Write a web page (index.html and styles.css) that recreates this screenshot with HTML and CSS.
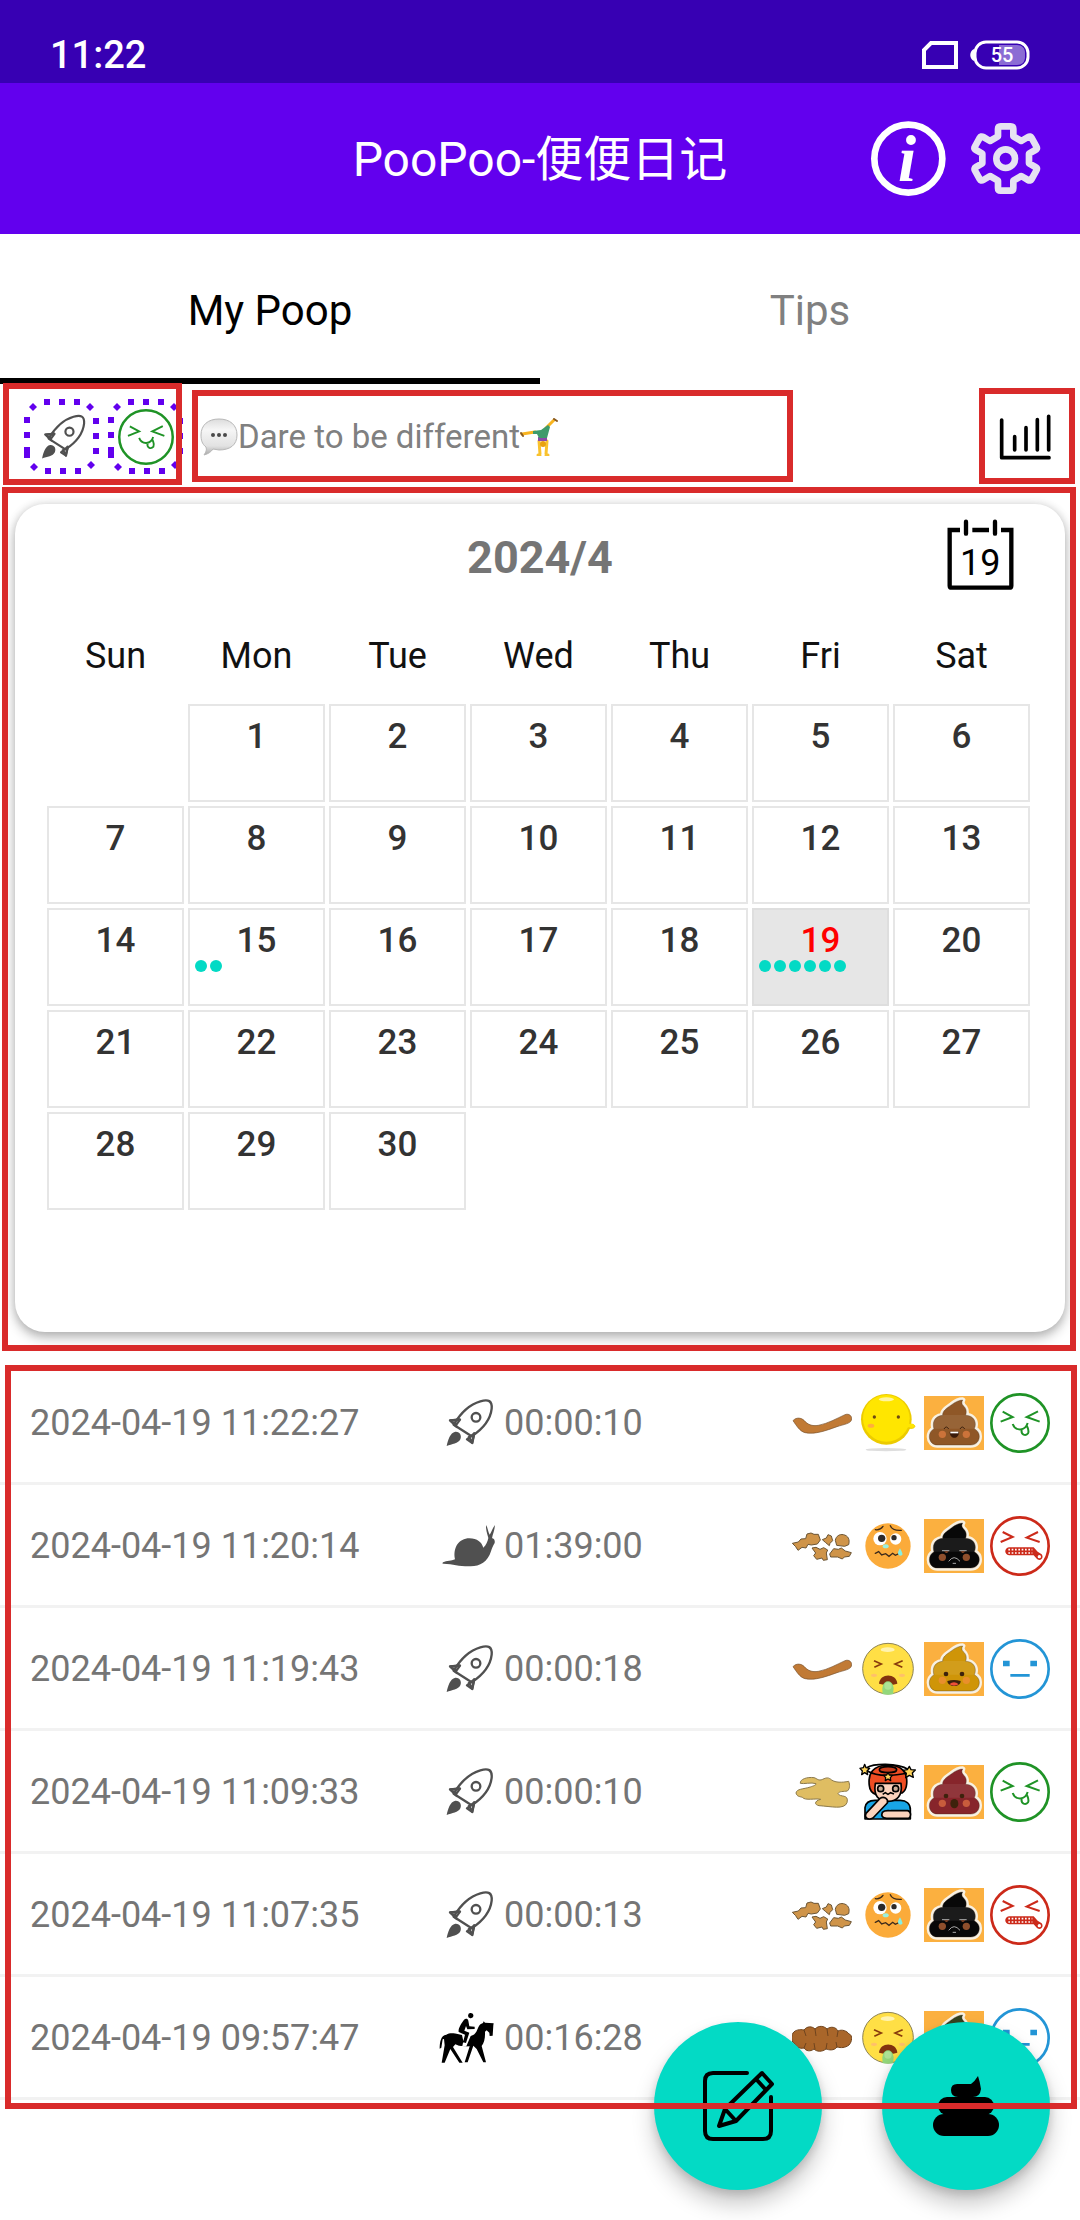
FILE: index.html
```html
<!DOCTYPE html>
<html lang="en">
<head>
<meta charset="utf-8">
<meta name="viewport" content="width=device-width, initial-scale=1">
<title>PooPoo-便便日记</title>
<link rel="stylesheet" href="styles.css">
</head>
<body>
<svg class="sprite" aria-hidden="true">
  <symbol id="rocket" viewBox="51 36 180 180">
    <g fill="none" stroke="#505050" stroke-width="7" stroke-linejoin="round">
      <path d="M98 131C114 104 140 72 178 61c24-7 36-2 34 22-4 36-28 62-60 83z"/>
      <path d="M118 115l-31 3 22 21M143 165l11 21 6-31"/>
      <path d="M105 132l12-16-28 2zM138 175l22-18-7 28z"/>
      <circle cx="165" cy="109" r="13"/>
    </g>
    <path fill="#505050" d="M77 195c4-18 10-40 26-43 14-1 20 12 15 23-6 13-25 14-41 20z"/>
  </symbol>
  <symbol id="snail" viewBox="51 405 180 180">
    <path fill="#505050" d="M65 545c6-5 20-4 37-10-7-35 12-63 43-63 24 0 37 12 42 28 9-8 13-19 15-29-4-14-8-27-7-39 5 6 6 20 11 29 6-8 8-20 16-29-1 16-7 28-9 40 6 0 10 7 8 14-5 9-8 14-11 25-10 32-33 45-61 45-34 1-50-7-82-8-3-1-4-2-2-3z"/>
  </symbol>
  <symbol id="rider" viewBox="21 21 180 180">
    <path fill="#000" d="M117 36a8 8 0 1 1-1 15 8 8 0 0 1 1-15zM98 58c5-6 12-6 14 1l3 17 16 1v7l-22 1-4-10-5 14 15 6-10 31-9-2 6-23-19-8c-2-10 8-25 15-35zM26 143c0-18 3-41 20-42 10-7 26-4 34-2l13 3 4 19-3 14 12 1 13-31c14-4 17-12 22-24 4-10 8-12 15-15l2-5 4 4 26 2-1 6-2 31-9 1-1-10-8-7-5 4c1 20-3 33-10 43l13 49h-8l-20-40-10-10-17 50h-9l15-48-32-2-11-4-7 8 29 47h-10l-27-41-17 41h-9l9-52-2-19-4 1-4 25z"/>
  </symbol>
  <symbol id="stool-smooth" viewBox="36 36 180 180">
    <path fill="#c17a35" stroke="#75512f" stroke-width="2" d="M39 119c10-11 24-9 33-1 11 13 24 18 43 15 28-5 56-21 80-32 13-5 23 5 19 17-4 10-22 12-43 19-34 12-65 24-96 18-17-5-25-21-36-36z"/>
  </symbol>
  <symbol id="stool-lumps" viewBox="36 405 180 180">
    <g fill="#cf9449" stroke="#6b5535" stroke-width="3" stroke-linejoin="round">
      <path d="M37 487l18-4 8-9 14-1 4-14 12-3 9 4 13 0 6 17-9 12-18 3-10-2-6 11-12-2-12 9-7-11z"/>
      <path d="M127 476l12-5 5-10 10 4 4 14-8 8-2 7-12-10z"/>
      <path d="M166 478c2-13 13-19 24-17 15 3 20 15 16 30l-12 5-24-3z"/>
      <path d="M96 501l12-2 12 6 11-5 12 7-4 9 3 20-12 2-4-7-16 4-9-11 6-8z"/>
      <path d="M149 519l12-16 14 2 9-4 12 9 18 5-6 11-15 2-6 6-14-6-21 0z"/>
    </g>
  </symbol>
  <symbol id="stool-loose" viewBox="36 483 180 180">
    <path fill="#dfbd62" stroke="#8c7a4c" stroke-width="3" d="M61 547c-2-12 20-20 41-17 9 2 13 11 26 5 12-6 18-6 27 2 12 8 30 8 51 4 4 11 4 22-4 29-11 2-25 0-28 8 6 12 34 0 27 27-8 22-48 11-84 9-18-4-10-16 5-19-16-4-46 5-55-6-9-3-16-2-19-13 2-13 21-11 43-18 9-3 18-6 17-10-14-5-37 2-47-1z"/>
  </symbol>
  <symbol id="stool-bumpy" viewBox="0 0 60 60">
    <path fill="#a9662a" stroke="#70451f" stroke-width="1" d="M1 25c2-3 7-4 11-3 3-4 8-4 11-1 4-4 9-3 12 0 4-3 9-2 11 2 4-2 9 0 11 3 4 1 3 8 0 11-4 3-8 3-12 2-3 4-8 3-11 2-4 3-9 3-12 0-4 3-8 2-10-1-5 1-8-1-9-4-4-2-4-7-2-11z"/>
    <path fill="none" stroke="#70451f" stroke-width="1" d="M12 22l2 6M23 21l1 7M35 21l1 7M46 23l-1 6M12 40l2-5M23 41l-1-6M34 41l1-6M45 39l-1-5"/>
  </symbol>
  <symbol id="mood-calm" viewBox="234 36 180 180">
    <ellipse cx="318" cy="206" rx="61" ry="5" fill="#dedede"/>
    <path fill="#ffe100" stroke="#f1cf00" stroke-width="3" d="M385 130h12c10 2 10 10 0 12h-15z"/>
    <circle cx="319" cy="115" r="76" fill="#eccb00"/>
    <circle cx="319" cy="112" r="70" fill="#ffe600"/>
    <path fill="#ffe600" d="M376 128h20c9 2 9 10 0 11h-24z"/>
    <ellipse cx="319" cy="55" rx="23" ry="6" fill="#fff4a0"/>
    <circle cx="283" cy="108" r="5" fill="#6d4a12"/><circle cx="355" cy="108" r="5" fill="#6d4a12"/>
    <ellipse cx="273" cy="134" rx="10" ry="6" fill="#ffb03c"/>
  </symbol>
  <symbol id="mood-pain" viewBox="234 405 180 180">
    <circle cx="324" cy="495" r="68" fill="#fbab3a"/>
    <circle cx="300" cy="473" r="20" fill="#fff"/><circle cx="347" cy="474" r="17" fill="#fff"/>
    <circle cx="305" cy="472" r="11" fill="#2d2a2a"/><circle cx="342" cy="470" r="8" fill="#2d2a2a"/>
    <path fill="none" stroke="#3d2b1b" stroke-width="4" stroke-linecap="round" d="M286 446c10 2 18-3 23-10M331 434c4 10 18 15 33 14M286 517l10-5 9 10 12-4 10 8 11-9 8 6 12-6 6-1"/>
    <ellipse cx="317" cy="496" rx="9" ry="6" fill="#9af0df"/>
    <path fill="#86efe4" d="M360 502c-8 12-8 20 0 22 10 0 10-4 0-22z"/>
  </symbol>
  <symbol id="mood-sick" viewBox="234 114 180 180">
    <circle cx="324" cy="203" r="76" fill="#ffdf45" stroke="#8d8356" stroke-width="3"/>
    <ellipse cx="323" cy="146" rx="21" ry="7" fill="#fff3b0"/>
    <path fill="none" stroke="#883b0c" stroke-width="5" d="M282 179l22 10-21 10M368 179l-23 10 22 10"/>
    <ellipse cx="282" cy="223" rx="9" ry="5" fill="#ffc06a"/><ellipse cx="366" cy="223" rx="9" ry="5" fill="#ffc06a"/>
    <path fill="#82330f" d="M297 248c2-33 53-33 55 0-15 5-37 5-55 0z"/>
    <path fill="#93d77b" d="M307 279c2-10-2-14 1-22 3-22 29-22 32 0 3 8-2 12 1 22-10 3-24 3-34 0z"/>
    <circle cx="324" cy="255" r="11" fill="#aee396"/>
  </symbol>
  <symbol id="mood-dizzy" viewBox="234 483 180 180">
    <g stroke="#000" stroke-width="5" stroke-linejoin="round">
      <path fill="#18a5e6" d="M255 654v-34c2-16 14-22 30-22h76c18 0 30 10 30 28v28z"/>
      <path fill="#ee4d23" d="M268 554c-5-38 12-61 55-62 43 0 60 22 57 57-1 14-6 22-14 27l-77 5c-13-4-20-14-21-27z"/>
      <path fill="#fcd3bd" d="M286 547h77c5 38-12 54-38 54-30 0-45-16-39-54z"/>
      <ellipse cx="324" cy="506" rx="26" ry="9" fill="#c73c1b"/>
      <path fill="none" d="M260 500c20-12 90-16 126 6M262 510c20 12 60 18 122 6"/>
      <circle cx="302" cy="563" r="9" fill="#c9ad97"/><circle cx="347" cy="563" r="9" fill="#c9ad97"/>
      <path fill="none" d="M308 580l8-5 8 5 8-5 10 4"/>
      <path fill="#fcd3bd" d="M258 637l42-45c12-8 26 2 22 14l-43 45c-16 8-27-2-21-14z"/>
      <path fill="#fcd3bd" d="M307 634c8-8 20-4 26-5h50c11 3 11 18 3 23h-66c-14-1-17-8-13-18z"/>
      <path fill="#ffd45a" stroke-width="4" d="M254 490l4 10 11 2-8 8 2 11-9-6-9 6 2-11-7-8 10-2zM388 496l5 10 13 1-9 9 3 13-12-6-11 7 2-13-10-9 13-2zM324 514l4 8 9 1-6 7 1 9-8-5-8 5 1-9-6-7 9-1z"/>
    </g>
  </symbol>
  <symbol id="poo" viewBox="432 36 180 180">
    <path fill="#fbb040" d="M432 45h180v162H432z"/>
    <path stroke="#f8f1e3" stroke-width="16" stroke-linejoin="round" d="M548 57c-8 0-22 5-33 14-18 12-28 20-27 32-14 1-28 10-28 28 0 6 1 9 2 12-10 6-14 14-14 24 0 14 10 25 24 25h100c16 0 26-11 26-26 0-10-6-18-15-23 2-4 3-8 3-13 0-16-12-27-29-27 4-13 1-22-7-29-5-5-6-10-2-17z"/>
    <path fill="currentColor" stroke="#3b2a1a" stroke-opacity=".5" stroke-width="2" d="M548 57c-8 0-22 5-33 14-18 12-28 20-27 32-14 1-28 10-28 28 0 6 1 9 2 12-10 6-14 14-14 24 0 14 10 25 24 25h100c16 0 26-11 26-26 0-10-6-18-15-23 2-4 3-8 3-13 0-16-12-27-29-27 4-13 1-22-7-29-5-5-6-10-2-17z"/>
    <path fill="#fff" fill-opacity=".08" d="M488 102h70c18 0 28 12 28 27 0 6-1 10-3 14H462c-8-22 8-40 26-41z"/>
    <circle cx="487" cy="160" r="11" fill="#ff8a4a" fill-opacity=".55"/><circle cx="559" cy="160" r="11" fill="#ff8a4a" fill-opacity=".55"/>
  </symbol>
  <symbol id="face-happy" viewBox="630 36 180 180">
    <g fill="none" stroke="#1f9326" stroke-width="6">
      <circle cx="720" cy="126" r="86" stroke-width="8"/>
      <path d="M668 92l30 16-36 14M774 91l-34 17 39 14M698 129c8 22 38 22 45-3M725 145c-3 18 12 20 19 12 4-7 0-13-3-22"/>
    </g>
  </symbol>
  <symbol id="face-bad" viewBox="630 405 180 180">
    <g fill="none" stroke="#cc2a1a" stroke-width="6">
      <circle cx="720" cy="495" r="86" stroke-width="8"/>
      <path d="M668 453l30 15-36 15M774 453l-34 17 39 13"/>
    </g>
    <path fill="#cc2a1a" d="M687 499h74l12 13 12 8c9 12-7 24-16 12l-8-9h-74c-15-3-15-21 0-24z"/>
    <path fill="none" stroke="#fff" stroke-width="5" stroke-dasharray="5 5" d="M685 506h72M685 516h72"/>
    <circle cx="778" cy="527" r="5" fill="#fff"/>
  </symbol>
  <symbol id="face-neutral" viewBox="630 114 180 180">
    <circle cx="720" cy="204" r="86" fill="none" stroke="#2395d6" stroke-width="8"/>
    <path fill="#2395d6" d="M669 179h20v17h-20zM751 179h20v17h-20zM691 219h58v8h-58z"/>
  </symbol>
  <symbol id="dots" viewBox="0 0 75 75">
    <path fill="#6200ee" d="M20 0h6v6h-6zM35 0h6v6h-6zM50 0h6v6h-6zM21 69h6v6h-6zM36 69h6v6h-6zM51 69h6v6h-6zM0 18h6v6H0zM0 33h6v6H0zM0 48h6v11H0zM69 19h6v6h-6zM69 34h6v6h-6zM69 49h6v6h-6zM9 4l4 4-4 4-4-4zM66 4l4 4-4 4-4-4zM10 64l4 4-4 4-4-4zM67 62l4 4-4 4-4-4z"/>
  </symbol>
</svg>

<div class="status-bar">
  <time>11:22</time>
  <div class="status-icons">
    <svg class="sim" viewBox="0 0 36 28" aria-hidden="true"><path d="M9 2h25v24H2V9z" fill="none" stroke="#fff" stroke-width="4"/></svg>
    <svg class="battery" viewBox="0 0 60 30" role="img" aria-label="Battery 55%">
      <path fill="#fff" d="M4 9v12c-5-2-5-10 0-12z"/>
      <rect x="5" y="2" width="53" height="26" rx="11" fill="none" stroke="#fff" stroke-width="3"/>
      <path fill="#8b6cd4" d="M29 5h18c5 0 8 3 8 8v4c0 5-3 8-8 8H29z"/>
      <text x="32" y="22" text-anchor="middle" class="battery-level">55</text>
    </svg>
  </div>
</div>

<header class="app-bar">
  <h1>PooPoo-便便日记</h1>
  <div class="app-actions">
    <button type="button" aria-label="About">
      <svg viewBox="30 63 225 225"><circle cx="142" cy="176" r="102" fill="none" stroke="#fff" stroke-width="20"/><text x="138" y="243" text-anchor="middle" class="info-letter">i</text></svg>
    </button>
    <button type="button" aria-label="Settings">
      <svg viewBox="322 62 225 225"><g fill="none" stroke="#e6e2f2" stroke-width="20" stroke-linejoin="round"><path d="M412 86q0-8 8-8h30q8 0 8 8v22l24 14 20-12q7-4 11 3l14 25q4 7-3 11l-19 11v29l19 11q7 4 3 11l-14 25q-4 7-11 3l-20-12-24 14v22q0 8-8 8h-30q-8 0-8-8v-22l-24-14-20 12q-7 4-11-3l-14-25q-4-7 3-11l19-11v-29l-19-11q-7-4-3-11l14-25q4-7 11-3l20 12 24-14z"/><circle cx="435" cy="175" r="28"/></g></svg>
    </button>
  </div>
</header>

<nav class="tabs">
  <a href="#poop" class="tab active" aria-current="page">My Poop</a>
  <a href="#tips" class="tab">Tips</a>
</nav>

<main id="poop">
  <section class="toolbar">
    <div class="summary">
      <button type="button" class="dotted" aria-label="Speed">
        <svg class="dots"><use href="#dots"/></svg><svg class="glyph"><use href="#rocket"/></svg>
      </button>
      <button type="button" class="dotted" aria-label="Feeling">
        <svg class="dots"><use href="#dots"/></svg><svg class="glyph"><use href="#face-happy"/></svg>
      </button>
      <span class="frame"></span>
    </div>
    <p class="quote">
      <svg viewBox="0 0 38 38" aria-hidden="true">
        <defs><linearGradient id="bubble" x2="0" y2="1"><stop offset="0" stop-color="#dcdcdc"/><stop offset=".3" stop-color="#f6f6f6"/><stop offset=".75" stop-color="#e2e2e2"/><stop offset="1" stop-color="#a8a8a8"/></linearGradient></defs>
        <path fill="url(#bubble)" stroke="#b8b8b8" stroke-width="1" d="M19 1c11 0 18 6 18 16S30 32 19 32l-6-1c-2 3-5 5-9 6 2-3 3-5 2-8-4-3-5-7-5-12C1 7 8 1 19 1z"/>
        <g fill="#4a4a4a"><circle cx="13" cy="17" r="2"/><circle cx="19" cy="17" r="2"/><circle cx="25" cy="17" r="2"/></g>
      </svg>
      <span>Dare to be different</span>
      <svg viewBox="0 0 38 38" aria-hidden="true">
        <g fill="none" stroke-linecap="round" stroke-linejoin="round">
          <path stroke="#f9b41e" stroke-width="3" d="M2 16l13-2M26 10l8-8"/>
          <path stroke="#8a5a22" stroke-width="2" d="M1 15l2 3M34 1l3 2"/>
          <path stroke="#f9c22e" stroke-width="3" d="M19 23l1 13M27 23l-1 13M18 37h2M26 37h2"/>
        </g>
        <circle cx="23" cy="26" r="3" fill="#e9a20f"/>
        <path fill="#8c4aa8" d="M18 19h9v4h-9z"/>
        <path fill="#3f9b6b" d="M13 13l8-1 7-5 2 2-3 11h-8l-2-4-4 0z"/>
      </svg>
      <span class="frame"></span>
    </p>
    <button type="button" class="stats" aria-label="Statistics">
      <svg viewBox="471 114 168 168"><path d="M485 147v113h142M524 197v40M558 170v67M592 146v91M626 136v101" fill="none" stroke="#000" stroke-width="11" stroke-linecap="round" stroke-linejoin="round"/></svg>
      <span class="frame"></span>
    </button>
  </section>

  <section class="card">
    <div class="card-head">
      <h2>2024/4</h2>
      <button type="button" class="today" aria-label="Go to today">
        <svg viewBox="318 444 201 213"><path d="M357 477h-31v167q0 6 6 6h173q6 0 6-6V477h-31M394 477h50" fill="none" stroke="#000" stroke-width="13"/><path d="M375 452v36M462 452v36" stroke="#000" stroke-width="13" stroke-linecap="round"/><text x="418" y="612" text-anchor="middle" class="today-number">19</text></svg>
      </button>
    </div>
    <table class="calendar">
      <thead><tr><th>Sun</th><th>Mon</th><th>Tue</th><th>Wed</th><th>Thu</th><th>Fri</th><th>Sat</th></tr></thead>
      <tbody>
        <tr><td class="empty"></td><td>1</td><td>2</td><td>3</td><td>4</td><td>5</td><td>6</td></tr>
        <tr><td>7</td><td>8</td><td>9</td><td>10</td><td>11</td><td>12</td><td>13</td></tr>
        <tr><td>14</td><td>15<span class="marks"><i></i><i></i></span></td><td>16</td><td>17</td><td>18</td><td class="selected">19<span class="marks"><i></i><i></i><i></i><i></i><i></i><i></i></span></td><td>20</td></tr>
        <tr><td>21</td><td>22</td><td>23</td><td>24</td><td>25</td><td>26</td><td>27</td></tr>
        <tr><td>28</td><td>29</td><td>30</td><td class="empty"></td><td class="empty"></td><td class="empty"></td><td class="empty"></td></tr>
      </tbody>
    </table>
    <span class="frame"></span>
  </section>

  <section class="log">
    <ul>
      <li>
        <time>2024-04-19 11:22:27</time>
        <span class="duration"><svg><use href="#rocket"/></svg>00:00:10</span>
        <span class="traits">
          <svg><use href="#stool-smooth"/></svg><svg><use href="#mood-calm"/></svg>
          <svg class="brown" viewBox="432 36 180 180"><use href="#poo" x="432" y="36" width="180" height="180"/><g fill="none" stroke="#3a1f0c" stroke-width="3"><path d="M492 144q7-12 14 0M540 144q7-12 14 0"/></g><path fill="#3a1a0a" d="M509 152h28c0 24-28 24-28 0z"/><path fill="#fff" d="M511 152h24v5h-24z"/></svg>
          <svg><use href="#face-happy"/></svg>
        </span>
      </li>
      <li>
        <time>2024-04-19 11:20:14</time>
        <span class="duration"><svg><use href="#snail"/></svg>01:39:00</span>
        <span class="traits">
          <svg><use href="#stool-lumps"/></svg><svg><use href="#mood-pain"/></svg>
          <svg class="black" viewBox="432 36 180 180"><use href="#poo" x="432" y="36" width="180" height="180"/><g fill="none" stroke="#aaa" stroke-width="3"><path d="M486 140h22M538 140h22M506 172q16-22 34 0M518 178h10"/></g><path fill="#8a4a2a" d="M492 142h14q-6 10-14 0zM542 142h14q-8 10-14 0z"/></svg>
          <svg><use href="#face-bad"/></svg>
        </span>
      </li>
      <li>
        <time>2024-04-19 11:19:43</time>
        <span class="duration"><svg><use href="#rocket"/></svg>00:00:18</span>
        <span class="traits">
          <svg><use href="#stool-smooth"/></svg><svg><use href="#mood-sick"/></svg>
          <svg class="yellow" viewBox="432 36 180 180"><use href="#poo" x="432" y="36" width="180" height="180"/><g fill="#3d220c"><circle cx="498" cy="141" r="7"/><circle cx="546" cy="141" r="7"/><path d="M502 162q20-6 40 0c1 20-39 20-40 0z"/></g><path fill="#ef5038" d="M508 172q14-12 28 0-14 8-28 0z"/></svg>
          <svg><use href="#face-neutral"/></svg>
        </span>
      </li>
      <li>
        <time>2024-04-19 11:09:33</time>
        <span class="duration"><svg><use href="#rocket"/></svg>00:00:10</span>
        <span class="traits">
          <svg><use href="#stool-loose"/></svg><svg><use href="#mood-dizzy"/></svg>
          <svg class="red" viewBox="432 36 180 180"><use href="#poo" x="432" y="36" width="180" height="180"/><g fill="#3d220c"><circle cx="498" cy="138" r="7"/><circle cx="546" cy="138" r="7"/><ellipse cx="523" cy="161" rx="12" ry="14"/></g></svg>
          <svg><use href="#face-happy"/></svg>
        </span>
      </li>
      <li>
        <time>2024-04-19 11:07:35</time>
        <span class="duration"><svg><use href="#rocket"/></svg>00:00:13</span>
        <span class="traits">
          <svg><use href="#stool-lumps"/></svg><svg><use href="#mood-pain"/></svg>
          <svg class="black" viewBox="432 36 180 180"><use href="#poo" x="432" y="36" width="180" height="180"/><g fill="none" stroke="#aaa" stroke-width="3"><path d="M486 140h22M538 140h22M506 172q16-22 34 0M518 178h10"/></g><path fill="#8a4a2a" d="M492 142h14q-6 10-14 0zM542 142h14q-8 10-14 0z"/></svg>
          <svg><use href="#face-bad"/></svg>
        </span>
      </li>
      <li>
        <time>2024-04-19 09:57:47</time>
        <span class="duration"><svg><use href="#rider"/></svg>00:16:28</span>
        <span class="traits">
          <svg><use href="#stool-bumpy"/></svg><svg><use href="#mood-sick"/></svg>
          <svg class="green"><use href="#poo"/></svg>
          <svg><use href="#face-neutral"/></svg>
        </span>
      </li>
    </ul>
    <span class="frame"></span>
  </section>
</main>

<div class="fabs">
  <button type="button" aria-label="Add a note">
    <svg width="72" height="72" viewBox="0 0 72 72"><g fill="none" stroke="#000" stroke-width="4" stroke-linejoin="round" stroke-linecap="round"><path d="M45 3H11q-8 0-8 8v50q0 8 8 8h50q8 0 8-8V27"/><path d="M17 56l6-17L60 3l10 11-36 37zM23 39l11 12M54 9l10 11"/></g></svg>
  </button>
  <button type="button" aria-label="Start timer">
    <svg width="66" height="60" viewBox="0 0 66 60"><path d="M45 0q2 6 3 13-1 8-8 8H25q-7 0-7-7t8-6h12Q42 5 45 0z"/><rect x="5" y="21" width="56" height="18" rx="9"/><rect y="38" width="66" height="22" rx="11"/></svg>
  </button>
</div>
</body>
</html>
```
FILE: styles.css
```css
* {
  box-sizing: border-box;
}

body {
  margin: 0;
  min-height: 100vh;
  background: #fff;
  color: #757575;
  font-family: Roboto, "Noto Sans CJK SC", sans-serif;
  font-size: 36px;
}

h1, h2, p, ul {
  margin: 0;
  padding: 0;
  font-weight: 400;
}

button {
  padding: 0;
  border: 0;
  background: none;
  font: inherit;
  cursor: pointer;
}

svg {
  display: block;
  flex: none;
}

.sprite {
  position: absolute;
  width: 0;
  height: 0;
}

/* highlight outline drawn over a section */
.frame {
  position: absolute;
  z-index: 3;
  border: 6px solid #d92b2b;
  pointer-events: none;
}

/* status bar */
.status-bar {
  display: flex;
  justify-content: space-between;
  align-items: flex-end;
  height: 83px;
  padding: 0 50px 8px 50px;
  background: #3700b3;
  color: #fff;
  font-size: 38px;
  font-weight: 500;
  line-height: 40px;
}

.status-icons {
  display: flex;
  align-items: center;
  gap: 12px;
  height: 40px;
}

.sim {
  width: 36px;
  height: 28px;
}

.battery {
  width: 60px;
  height: 30px;
}

.battery-level {
  fill: #fff;
  font-size: 20px;
  font-weight: 500;
}

/* app bar */
.app-bar {
  display: grid;
  grid-template-columns: 1fr auto 1fr;
  align-items: center;
  height: 151px;
  padding: 0 37px;
  background: #6200ee;
  color: #fff;
}

.app-bar h1 {
  grid-column: 2;
  padding-top: 3px;
  font-size: 48px;
  line-height: 60px;
}

.app-actions {
  display: flex;
  justify-content: flex-end;
  gap: 22px;
}

.app-actions svg {
  width: 75px;
  height: 75px;
}

.info-letter {
  fill: #fff;
  font: italic 700 196px "Liberation Serif", serif;
}

/* tabs */
.tabs {
  display: grid;
  grid-template-columns: 1fr 1fr;
}

.tab {
  padding: 50px 0 40px;
  border-bottom: 6px solid transparent;
  color: #808080;
  font-size: 42px;
  line-height: 54px;
  text-align: center;
  text-decoration: none;
}

.tab.active {
  border-color: #000;
  color: #000;
}

/* toolbar */
.toolbar {
  display: flex;
  height: 105px;
  padding: 0 27px 0 24px;
}

.summary {
  position: relative;
  display: flex;
  align-items: center;
  gap: 9px;
  margin-right: 17px;
}

.summary .frame {
  inset: -1px 1px 4px -21px;
}

.dotted {
  display: grid;
  place-items: center;
}

.dotted svg {
  grid-area: 1 / 1;
}

.dots {
  width: 75px;
  height: 75px;
}

.glyph {
  width: 56px;
  height: 56px;
}

.quote {
  position: relative;
  display: flex;
  flex: 0 1 593px;
  align-items: center;
  color: #808080;
  font-size: 33px;
  line-height: 40px;
}

.quote svg {
  width: 38px;
  height: 38px;
}

.quote .frame {
  inset: 6px 0 7px -8px;
}

.stats {
  position: relative;
  margin-left: auto;
}

.stats svg {
  width: 56px;
  height: 56px;
}

.stats .frame {
  inset: 4px -22px 5px -18px;
}

/* calendar card */
.card {
  position: relative;
  margin: 15px 15px 30px;
  padding: 0 31px 118px 28px;
  border-radius: 30px;
  background: #fff;
  box-shadow: 0 6px 12px rgba(0, 0, 0, 0.25), 0 0 10px rgba(0, 0, 0, 0.14);
}

.card > .frame {
  inset: -17px -11px -19px -13px;
}

.card-head {
  display: grid;
  grid-template-columns: 1fr auto 1fr;
  align-items: center;
  height: 108px;
  padding: 0 20px 0 23px;
}

.card-head h2 {
  grid-column: 2;
  font-size: 45px;
  font-weight: 700;
  line-height: 52px;
}

.today {
  justify-self: end;
  margin-bottom: 8px;
}

.today svg {
  width: 67px;
  height: 71px;
}

.today-number {
  font-size: 108px;
}

.calendar {
  width: 100%;
  border-collapse: separate;
  border-spacing: 4px;
  table-layout: fixed;
  text-align: center;
}

.calendar th {
  height: 84px;
  padding: 0 0 4px;
  color: #111;
  font-weight: 400;
}

.calendar td {
  height: 98px;
  padding: 12px 0 0;
  border: 2px solid #e6e6e6;
  color: #333;
  font-size: 35px;
  font-weight: 500;
  line-height: 38px;
  vertical-align: top;
}

.calendar .empty {
  border-color: transparent;
}

.calendar .selected {
  border-color: #dedede;
  background: #e6e6e6;
  color: #f00;
}

.marks {
  display: flex;
  gap: 3px;
  padding-left: 5px;
}

.marks i {
  width: 12px;
  height: 12px;
  border-radius: 50%;
  background: #03dac5;
}

/* log */
.log {
  position: relative;
}

.log > .frame {
  inset: 3px 3px -9px 5px;
}

.log ul {
  list-style: none;
}

.log li {
  display: grid;
  grid-template-columns: 40% 1fr auto;
  align-items: center;
  height: 123px;
  padding: 2px 30px 0;
  border-bottom: 3px solid #f2f2f2;
}

.log svg {
  width: 60px;
  height: 60px;
}

.duration {
  display: flex;
  align-items: center;
  gap: 6px;
}

.traits {
  display: flex;
  gap: 6px;
}

.brown { color: #8f5727; }
.black { color: #080808; }
.yellow { color: #cf9508; }
.red { color: #87252b; }
.green { color: #35421f; }

/* floating buttons */
.fabs {
  position: fixed;
  right: 30px;
  bottom: 30px;
  z-index: 2;
  display: flex;
  gap: 60px;
}

.fabs button {
  display: grid;
  place-items: center;
  width: 168px;
  height: 168px;
  border-radius: 50%;
  background: #03dac5;
  box-shadow: 0 14px 22px rgba(0, 0, 0, 0.22), 0 4px 10px rgba(0, 0, 0, 0.14);
}
```
